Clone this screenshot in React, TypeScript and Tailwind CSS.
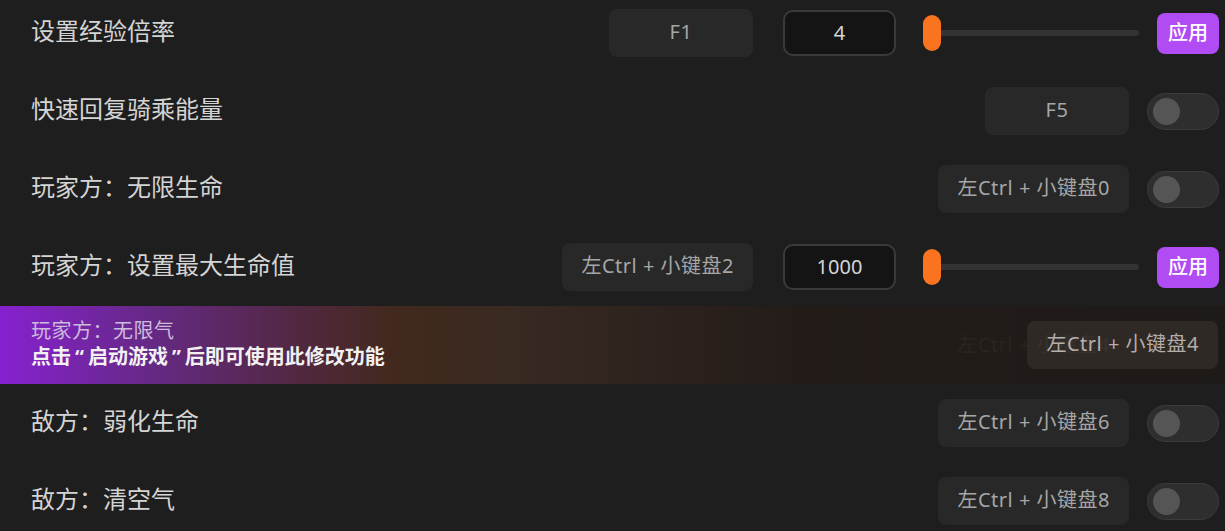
const font = { fontFamily: '"Noto Sans", "Noto Sans CJK SC", sans-serif' };

type Row =
  | { kind: "slider"; label: string; keys: string; value: string }
  | { kind: "toggle"; label: string; keys: string };

const rows: Row[] = [
  { kind: "slider", label: "设置经验倍率", keys: "F1", value: "4" },
  { kind: "toggle", label: "快速回复骑乘能量", keys: "F5" },
  { kind: "toggle", label: "玩家方：无限生命", keys: "左Ctrl + 小键盘0" },
  { kind: "slider", label: "玩家方：设置最大生命值", keys: "左Ctrl + 小键盘2", value: "1000" },
];

const rowsAfter: Row[] = [
  { kind: "toggle", label: "敌方：弱化生命", keys: "左Ctrl + 小键盘6" },
  { kind: "toggle", label: "敌方：清空气", keys: "左Ctrl + 小键盘8" },
];

function KeyBadge({ keys }: { keys: string }) {
  return (
    <div className="h-[48px] min-w-[144px] px-[19px] rounded-lg bg-[#282828] flex items-center justify-center text-[20px] tracking-[0.5px] text-[#a6a6a6]">
      <span className="-mt-[2px]">{keys}</span>
    </div>
  );
}

function Toggle() {
  return (
    <div className="w-[72px] h-[37px] rounded-full bg-[#2e2e2e] border border-[#3b3b3b] flex items-center pl-[5px]">
      <div className="w-[27px] h-[27px] rounded-full bg-[#555555]" />
    </div>
  );
}

function SliderControls({ value }: { value: string }) {
  return (
    <div className="flex items-center">
      <div className="ml-[30px] w-[113px] h-[46px] rounded-[10px] bg-[#141414] border-2 border-[#3a3a3a] flex items-center justify-center text-[20px] text-[#d6d6d6]">
        {value}
      </div>
      <div className="ml-[27px] w-[216px] h-[36px] relative flex items-center">
        <div className="ml-[9px] flex-1 h-[6px] rounded-full bg-[#333333]" />
        <div className="absolute left-0 top-0 w-[18px] h-[36px] rounded-full bg-[#fa7420]" />
      </div>
      <button className="ml-[18px] w-[62px] h-[41px] rounded-lg bg-[#b14cf5] text-white text-[20px] font-medium">
        应用
      </button>
    </div>
  );
}

function SettingRow({ row }: { row: Row }) {
  return (
    <div className="h-[78px] flex items-center justify-between pl-[31px] pr-[6px]">
      <div className="text-[24px] text-[#d4d4d4] -mt-[4px]">{row.label}</div>
      <div className="flex items-center">
        <KeyBadge keys={row.keys} />
        {row.kind === "slider" ? (
          <SliderControls value={row.value} />
        ) : (
          <div className="ml-[18px]">
            <Toggle />
          </div>
        )}
      </div>
    </div>
  );
}

export default function App() {
  return (
    <div className="w-[1225px] h-[531px] overflow-hidden bg-[#1e1e1e]" style={font}>
      <div className="-mt-[6px]">
        {rows.map((r, i) => (
          <SettingRow key={i} row={r} />
        ))}

        {/* locked row with overlay */}
        <div className="h-[78px] relative">
          <div className="h-full flex items-center justify-end pr-[6px]">
            <div className="h-[48px] px-[19px] flex items-center text-[20px] tracking-[0.5px] text-[#a6a6a6]">左Ctrl + 小键盘4</div>
            <div className="ml-[18px] w-[72px] h-[37px]" />
          </div>
          <div className="absolute inset-0 bg-[linear-gradient(to_right,#8e22dc_0%,#6b2a8e_12%,#54293f_25%,#452a1f_32%,#3a2a22_42%,#231c19_65%,#1f1a18_100%)] opacity-[0.94] flex items-center justify-between pl-[31px] pr-[7px]">
            <div className="flex flex-col leading-[26px] -mt-[2px]">
              <div className="text-[20px] tracking-[0.5px] text-[#d8c4e8]">玩家方：无限气</div>
              <div className="text-[20px] font-bold text-white">
                点击<span className="px-[4px]">“</span>启动游戏<span className="px-[4px]">”</span>后即可使用此修改功能
              </div>
            </div>
            <div className="h-[48px] px-[19px] rounded-lg bg-[#312a27] flex items-center text-[20px] tracking-[0.5px] text-[#bdb6b2]">
              <span className="-mt-[2px]">左Ctrl + 小键盘4</span>
            </div>
          </div>
        </div>

        {rowsAfter.map((r, i) => (
          <SettingRow key={i} row={r} />
        ))}
      </div>
    </div>
  );
}
